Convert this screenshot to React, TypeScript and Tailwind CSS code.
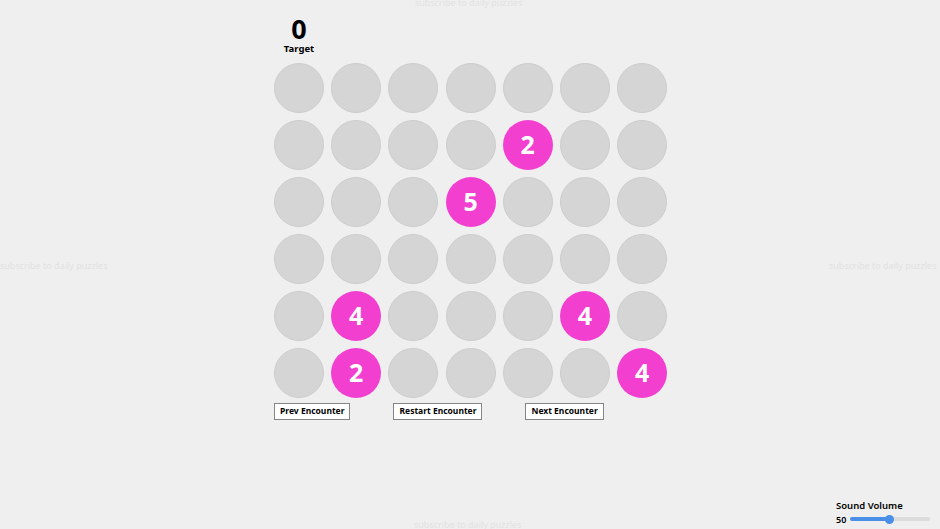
import React from "react";

const board: (number | null)[][] = [
  [null, null, null, null, null, null, null],
  [null, null, null, null, 2, null, null],
  [null, null, null, 5, null, null, null],
  [null, null, null, null, null, null, null],
  [null, 4, null, null, null, 4, null],
  [null, 2, null, null, null, null, 4],
];

export default function App() {
  return (
    <div
      className="relative w-[940px] h-[529px] overflow-hidden bg-[#efefef] text-black"
      style={{ fontFamily: '"Noto Sans", "Open Sans", sans-serif' }}
    >
      <div className="absolute left-[415px] top-[-4px] text-[9px] text-[#e2e2e2]">subscribe to daily puzzles</div>
      <div className="absolute left-0 top-[259px] text-[9px] text-[#e2e2e2]">subscribe to daily puzzles</div>
      <div className="absolute left-[829px] top-[259px] text-[9px] text-[#e2e2e2] whitespace-nowrap">subscribe to daily puzzles</div>
      <div className="absolute left-[414px] top-[518px] text-[9px] text-[#e2e2e2]">subscribe to daily puzzles</div>

      <div className="flex flex-col items-center pt-[16px]">
        <div className="w-[392px]">
          <div className="w-[50px] flex flex-col items-center">
            <div className="text-[27px] font-bold leading-[25px]">0</div>
            <div className="mt-[2px] text-[9.5px] font-bold leading-[11px]">Target</div>
          </div>
          <div className="mt-[9px] grid grid-cols-[repeat(7,50px)] gap-x-[7.2px] gap-y-[7px]">
            {board.flat().map((v, i) =>
              v === null ? (
                <div key={i} className="w-[50px] h-[50px] rounded-full bg-[#d5d5d5] border border-[#cdcdcd]" />
              ) : (
                <div
                  key={i}
                  className="w-[50px] h-[50px] rounded-full bg-[#f33fcf] flex items-center justify-center text-white font-bold text-[25px]"
                >
                  {v}
                </div>
              )
            )}
          </div>
          <div className="mt-[5px] flex gap-[43px]">
            <button className="h-[17px] px-[5px] bg-white border border-[#858585] text-[8.5px] font-bold leading-none">Prev Encounter</button>
            <button className="h-[17px] px-[5px] bg-white border border-[#858585] text-[8.5px] font-bold leading-none">Restart Encounter</button>
            <button className="h-[17px] px-[5px] bg-white border border-[#858585] text-[8.5px] font-bold leading-none">Next Encounter</button>
          </div>
        </div>
      </div>

      <div className="absolute left-[836px] top-[499px]">
        <div className="text-[9.5px] font-semibold leading-[13px]">Sound Volume</div>
        <div className="flex items-center gap-[4px] mt-[2px]">
          <span className="text-[9px] font-semibold leading-none">50</span>
          <div className="relative w-[80px] h-[10px] flex items-center">
            <div className="w-full h-[4px] rounded-full bg-[#dcdcdc] flex">
              <div className="w-1/2 h-full rounded-full bg-[#4a8fe7]" />
            </div>
            <div className="absolute left-[35px] top-[0.5px] w-[9px] h-[9px] rounded-full bg-[#4a8fe7]" />
          </div>
        </div>
      </div>
    </div>
  );
}
